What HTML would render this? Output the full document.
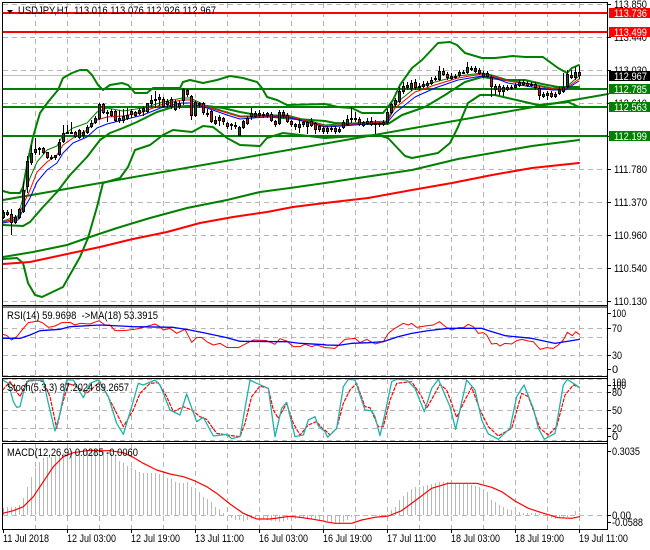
<!DOCTYPE html>
<html><head><meta charset="utf-8"><title>USDJPY,H1</title>
<style>
html,body{margin:0;padding:0;background:#fff;width:650px;height:550px;overflow:hidden}
svg{display:block}
text{font-family:"Liberation Sans",sans-serif;font-size:11px;fill:#000}
.g{fill:none;stroke:#b6b6b6;stroke-width:1;stroke-dasharray:5 4}
.l{fill:none;stroke-linejoin:round;stroke-linecap:round}
.z{vector-effect:non-scaling-stroke}
</style></head><body>
<svg width="650" height="550" viewBox="0 0 650 550" xmlns="http://www.w3.org/2000/svg">
<rect width="650" height="550" fill="#fff"/>
<!-- grid -->
<path class="g" d="M35.5 3V305M67.5 3V305M99.5 3V305M131.5 3V305M163.5 3V305M195.5 3V305M227.5 3V305M259.5 3V305M291.5 3V305M323.5 3V305M355.5 3V305M387.5 3V305M419.5 3V305M451.5 3V305M483.5 3V305M515.5 3V305M547.5 3V305M579.5 3V305"/>
<path class="g" d="M35.5 307V376M67.5 307V376M99.5 307V376M131.5 307V376M163.5 307V376M195.5 307V376M227.5 307V376M259.5 307V376M291.5 307V376M323.5 307V376M355.5 307V376M387.5 307V376M419.5 307V376M451.5 307V376M483.5 307V376M515.5 307V376M547.5 307V376M579.5 307V376"/>
<path class="g" d="M35.5 379V441M67.5 379V441M99.5 379V441M131.5 379V441M163.5 379V441M195.5 379V441M227.5 379V441M259.5 379V441M291.5 379V441M323.5 379V441M355.5 379V441M387.5 379V441M419.5 379V441M451.5 379V441M483.5 379V441M515.5 379V441M547.5 379V441M579.5 379V441"/>
<path class="g" d="M35.5 444V529M67.5 444V529M99.5 444V529M131.5 444V529M163.5 444V529M195.5 444V529M227.5 444V529M259.5 444V529M291.5 444V529M323.5 444V529M355.5 444V529M387.5 444V529M419.5 444V529M451.5 444V529M483.5 444V529M515.5 444V529M547.5 444V529M579.5 444V529"/>
<path class="g" d="M3 4.5H607M3 37.5H607M3 70.5H607M3 103.5H607M3 136.5H607M3 169.5H607M3 202.5H607M3 235.5H607M3 268.5H607M3 301.5H607"/>
<path class="g" d="M3 328.5H607M3 337.5H607M3 355.5H607M3 375.5H607"/>
<path class="g" d="M3 379.5H607M3 392.5H607M3 410.5H607M3 428.5H607M3 440.5H607"/>
<path class="g" d="M3 515.5H607"/>
<path d="M3 75.5H607" stroke="#c0c0c0" fill="none"/>

<!-- Bollinger / MA curves -->
<polyline class="l" stroke="#008000" stroke-width="2" points="3,191 10,193 20,193 23,187 28,160 33,137 40,113 48,102 58,90 63,78 72,73 80,70 87,70 92,75 98,85 103,90 110,85 122,83 128,85 135,93 147,93 153,88 180,88 183,82 190,80 203,83 217,80 230,76 243,78 257,82 262,88 267,97 277,100 287,105 325,104 338,107 352,108 362,113 383,113 388,107 393,100 400,85 412,68 422,60 438,43 450,42 457,45 465,53 482,58 495,58 513,56 525,57 543,57 558,68 567,73 572,68 579,65"/>
<polyline class="l" stroke="#008000" stroke-width="2" points="3,225 23,226 30,222 43,207 57,192 70,175 87,157 100,140 110,133 123,128 137,122 157,112 173,107 187,106 207,106 223,108 240,112 257,115 283,118 325,121 335,123 358,124 388,124 402,115 425,107 445,95 465,82 482,77 505,80 525,80 542,84 558,87 579,87"/>
<polyline class="l" stroke="#008000" stroke-width="2" points="3,259 17,258 23,263 28,283 35,295 42,297 63,287 80,257 88,238 97,207 103,183 120,178 128,167 135,150 150,145 163,135 173,130 192,132 203,126 213,127 227,138 240,145 260,146 267,138 283,133 300,135 325,138 340,137 378,135 388,138 405,156 412,158 438,153 450,143 458,127 468,103 480,95 495,95 512,99 538,105 558,103 568,102 579,107"/>
<polyline class="l" stroke="#008000" stroke-width="2" points="3,200 608,94"/>
<polyline class="l" stroke="#008000" stroke-width="2" points="3,257 33,252 67,245 87,238 117,228 150,218 187,208 227,200 260,192 290,188 325,183 358,178 412,170 458,159 492,153 532,146 579,140"/>
<polyline class="l" stroke="#ff0000" stroke-width="2" points="3,264 30,262 67,254 100,247 133,239 167,232 200,223 233,217 267,212 293,207 325,203 368,198 412,190 452,183 492,175 532,168 579,163"/>

<!-- levels -->
<path d="M3 13H608M3 32H608" stroke="#ff0000" stroke-width="2" fill="none"/>
<path d="M3 89H608M3 107H608M3 136H608" stroke="#008000" stroke-width="2" fill="none"/>

<!-- fast MAs -->
<polyline class="l" stroke="#008000" stroke-width="1" points="3,221 18,216 23,198 30,178 37,162 47,150 57,146 63,135 73,128 87,123 97,112 107,108 123,111 143,108 163,102 182,98 190,98 207,106 227,112 240,116 253,116 267,115 287,115 325,125 368,122 387,121 395,104 415,88 435,82 458,76 482,73 492,75 508,80 532,84 552,88 565,88 579,76"/>
<polyline class="l" stroke="#ff0000" stroke-width="1" points="3,222 18,218 23,205 30,190 37,172 47,162 57,155 63,145 73,138 87,130 97,120 107,117 123,116 143,112 163,104 182,100 190,100 207,107 227,113 240,117 253,117 267,116 287,116 325,126 342,125 368,123 387,122 395,108 415,92 435,85 458,78 482,74 492,76 508,81 532,85 552,89 565,89 579,79"/>
<polyline class="l" stroke="#0000ff" stroke-width="1" points="3,223 18,220 23,210 30,198 37,182 47,170 57,163 63,153 73,143 87,137 97,128 107,124 123,120 143,115 163,107 182,103 190,103 207,108 227,115 240,119 253,118 267,117 287,117 325,127 342,126 368,124 387,123 395,113 415,97 435,88 458,80 482,76 492,77 508,83 532,87 552,90 565,90 579,81"/>

<!-- candle wicks -->
<path stroke="#000" fill="none" d="M3.5 210V219M7.5 210V216M11.5 209V235M15.5 215V224M19.5 208V219M23.5 182V213M27.5 156V193M31.5 145V165M35.5 138V155M39.5 147V155M43.5 147V154M47.5 152V159M51.5 155V160M55.5 155V160M59.5 139V156M63.5 125V143M67.5 125V134M71.5 122V134M75.5 131V138M79.5 129V139M83.5 130V138M87.5 125V134M91.5 120V128M95.5 116V124M99.5 103V120M103.5 103V114M107.5 110V122M111.5 109V117M115.5 110V122M119.5 110V123M123.5 109V123M127.5 108V120M131.5 109V118M135.5 111V117M139.5 108V115M143.5 106V116M147.5 103V113M151.5 95V107M155.5 91V108M159.5 94V106M163.5 97V108M167.5 99V108M171.5 97V109M175.5 100V111M179.5 101V109M183.5 88V105M187.5 89V97M191.5 95V120M195.5 101V117M199.5 102V108M203.5 102V115M207.5 109V117M211.5 110V123M215.5 116V125M219.5 115V126M223.5 117V125M227.5 122V129M231.5 123V130M235.5 122V129M239.5 126V136M243.5 120V129M247.5 116V125M251.5 108V120M255.5 111V118M259.5 110V117M263.5 112V118M267.5 112V118M271.5 112V122M275.5 120V127M279.5 110V125M283.5 110V118M287.5 113V123M291.5 120V127M295.5 123V130M299.5 119V133M303.5 121V127M307.5 121V134M311.5 118V127M315.5 122V134M319.5 125V132M323.5 126V134M327.5 126V134M331.5 126V132M335.5 126V134M339.5 127V133M343.5 120V129M347.5 115V126M351.5 107V123M355.5 112V122M359.5 117V126M363.5 121V127M367.5 118V125M371.5 117V126M375.5 120V134M379.5 122V127M383.5 120V126M387.5 109V124M391.5 103V114M395.5 98V107M399.5 87V103M403.5 82V94M407.5 82V90M411.5 80V91M415.5 79V90M419.5 83V90M423.5 81V88M427.5 81V87M431.5 77V85M435.5 76V81M439.5 66V81M443.5 68V76M447.5 72V80M451.5 73V80M455.5 74V79M459.5 70V77M463.5 70V74M467.5 62V74M471.5 66V71M475.5 66V73M479.5 68V75M483.5 71V78M487.5 71V78M491.5 75V97M495.5 84V95M499.5 84V95M503.5 85V96M507.5 85V91M511.5 85V90M515.5 83V89M519.5 80V87M523.5 80V86M527.5 81V87M531.5 82V87M535.5 82V90M539.5 86V100M543.5 92V98M547.5 91V100M551.5 91V98M555.5 92V98M559.5 87V95M563.5 73V93M567.5 70V88M571.5 70V79M575.5 67V80M579.5 66V79"/>
<!-- green bodies -->
<path stroke="#000" fill="#006400" d="M2.5 212.5h2v5h-2zM6.5 212.5h2v2h-2zM14.5 217.5h2v5h-2zM18.5 209.5h2v8h-2zM22.5 190.5h2v21h-2zM26.5 161.5h2v25h-2zM30.5 153.5h2v9h-2zM34.5 149.5h2v3h-2zM38.5 148.5h2v1h-2zM50.5 157.5h2v1h-2zM54.5 155.5h2v2h-2zM58.5 142.5h2v12h-2zM62.5 133.5h2v8h-2zM66.5 132.5h2v1h-2zM70.5 132.5h2v1h-2zM78.5 130.5h2v7h-2zM82.5 132.5h2v3h-2zM86.5 127.5h2v5h-2zM90.5 123.5h2v3h-2zM94.5 118.5h2v4h-2zM98.5 104.5h2v14h-2zM106.5 112.5h2v1h-2zM110.5 111.5h2v4h-2zM118.5 118.5h2v2h-2zM122.5 116.5h2v4h-2zM126.5 115.5h2v3h-2zM130.5 111.5h2v3h-2zM138.5 110.5h2v3h-2zM142.5 108.5h2v3h-2zM146.5 103.5h2v8h-2zM150.5 100.5h2v3h-2zM154.5 99.5h2v1h-2zM158.5 97.5h2v2h-2zM166.5 101.5h2v3h-2zM174.5 102.5h2v7h-2zM178.5 103.5h2v3h-2zM182.5 89.5h2v11h-2zM194.5 102.5h2v13h-2zM198.5 103.5h2v1h-2zM206.5 113.5h2v1h-2zM214.5 120.5h2v3h-2zM218.5 117.5h2v3h-2zM234.5 125.5h2v1h-2zM238.5 127.5h2v8h-2zM242.5 121.5h2v6h-2zM250.5 113.5h2v3h-2zM254.5 113.5h2v3h-2zM258.5 113.5h2v2h-2zM266.5 113.5h2v2h-2zM278.5 112.5h2v11h-2zM294.5 124.5h2v2h-2zM298.5 124.5h2v3h-2zM306.5 122.5h2v4h-2zM322.5 128.5h2v3h-2zM326.5 128.5h2v3h-2zM330.5 128.5h2v1h-2zM338.5 129.5h2v2h-2zM342.5 122.5h2v5h-2zM346.5 119.5h2v5h-2zM350.5 118.5h2v1h-2zM354.5 118.5h2v1h-2zM362.5 122.5h2v3h-2zM366.5 121.5h2v2h-2zM374.5 123.5h2v1h-2zM378.5 123.5h2v1h-2zM382.5 122.5h2v2h-2zM386.5 112.5h2v10h-2zM390.5 104.5h2v8h-2zM394.5 100.5h2v4h-2zM398.5 91.5h2v10h-2zM402.5 86.5h2v5h-2zM406.5 85.5h2v2h-2zM410.5 83.5h2v5h-2zM418.5 86.5h2v1h-2zM422.5 84.5h2v2h-2zM426.5 83.5h2v2h-2zM430.5 80.5h2v3h-2zM434.5 78.5h2v1h-2zM438.5 71.5h2v8h-2zM450.5 76.5h2v2h-2zM454.5 76.5h2v1h-2zM458.5 72.5h2v3h-2zM462.5 72.5h2v1h-2zM466.5 67.5h2v5h-2zM470.5 68.5h2v1h-2zM474.5 68.5h2v3h-2zM478.5 70.5h2v3h-2zM482.5 73.5h2v3h-2zM486.5 73.5h2v3h-2zM494.5 86.5h2v3h-2zM502.5 87.5h2v4h-2zM506.5 87.5h2v2h-2zM510.5 87.5h2v1h-2zM514.5 85.5h2v2h-2zM518.5 82.5h2v3h-2zM522.5 82.5h2v2h-2zM530.5 84.5h2v1h-2zM542.5 94.5h2v2h-2zM546.5 93.5h2v2h-2zM558.5 89.5h2v4h-2zM562.5 87.5h2v4h-2zM566.5 74.5h2v12h-2zM574.5 72.5h2v5h-2z"/>
<!-- red bodies -->
<path stroke="#000" fill="#ff0000" d="M10.5 214.5h2v8h-2zM42.5 148.5h2v4h-2zM46.5 152.5h2v5h-2zM74.5 132.5h2v4h-2zM102.5 104.5h2v8h-2zM114.5 111.5h2v9h-2zM134.5 112.5h2v3h-2zM162.5 99.5h2v7h-2zM170.5 99.5h2v7h-2zM186.5 90.5h2v4h-2zM190.5 96.5h2v19h-2zM202.5 103.5h2v9h-2zM210.5 111.5h2v10h-2zM222.5 118.5h2v3h-2zM226.5 123.5h2v3h-2zM230.5 124.5h2v1h-2zM246.5 118.5h2v5h-2zM262.5 114.5h2v1h-2zM270.5 114.5h2v6h-2zM274.5 121.5h2v3h-2zM282.5 112.5h2v3h-2zM286.5 115.5h2v6h-2zM290.5 121.5h2v3h-2zM302.5 122.5h2v2h-2zM310.5 121.5h2v4h-2zM314.5 123.5h2v6h-2zM318.5 126.5h2v3h-2zM334.5 128.5h2v3h-2zM358.5 119.5h2v5h-2zM370.5 121.5h2v3h-2zM414.5 82.5h2v5h-2zM442.5 71.5h2v3h-2zM446.5 74.5h2v3h-2zM490.5 77.5h2v9h-2zM498.5 86.5h2v5h-2zM526.5 83.5h2v2h-2zM534.5 84.5h2v3h-2zM538.5 88.5h2v7h-2zM550.5 93.5h2v3h-2zM554.5 94.5h2v2h-2zM570.5 75.5h2v2h-2zM578.5 72.5h2v3h-2z"/>

<!-- indicators (coordinates at 3x scale) -->
<path stroke="#b8b8b8" fill="none" d="M3.5 515V508M7.5 515V507M11.5 515V507M15.5 515V507M19.5 515V505M23.5 515V498M27.5 515V487M31.5 515V477M35.5 515V468M39.5 515V462M43.5 515V458M47.5 515V457M51.5 515V457M55.5 515V456M59.5 515V455M63.5 515V453M67.5 515V452M71.5 515V451M75.5 515V451M79.5 515V450M83.5 515V450M87.5 515V450M91.5 515V450M95.5 515V450M99.5 515V450M103.5 515V451M107.5 515V452M111.5 515V453M115.5 515V455M119.5 515V461M123.5 515V463M127.5 515V466M131.5 515V468M135.5 515V470M139.5 515V472M143.5 515V473M147.5 515V473M151.5 515V473M155.5 515V473M159.5 515V474M163.5 515V475M167.5 515V478M171.5 515V479M175.5 515V482M179.5 515V483M183.5 515V483M187.5 515V482M191.5 515V487M195.5 515V488M199.5 515V492M203.5 515V497M207.5 515V499M211.5 515V502M215.5 515V507M219.5 515V509M223.5 515V513M231.5 515V518M235.5 515V520M239.5 515V520M243.5 515V521M247.5 515V520M251.5 515V519M255.5 515V518M259.5 515V518M263.5 515V519M267.5 515V520M271.5 515V521M275.5 515V521M279.5 515V522M283.5 515V521M287.5 515V520M291.5 515V519M295.5 515V519M299.5 515V518M303.5 515V518M307.5 515V518M311.5 515V519M315.5 515V519M319.5 515V520M323.5 515V520M327.5 515V522M331.5 515V523M335.5 515V524M339.5 515V523M343.5 515V522M347.5 515V520M351.5 515V517M355.5 515V517M359.5 515V516M363.5 515V516M367.5 515V516M371.5 515V516M375.5 515V516M379.5 515V516M383.5 515V516M387.5 515V514M391.5 515V510M395.5 515V507M399.5 515V500M403.5 515V496M407.5 515V492M411.5 515V489M415.5 515V487M419.5 515V487M423.5 515V486M427.5 515V485M431.5 515V484M435.5 515V483M439.5 515V482M443.5 515V482M447.5 515V482M451.5 515V483M455.5 515V484M459.5 515V484M463.5 515V484M467.5 515V484M471.5 515V485M475.5 515V486M479.5 515V487M483.5 515V489M487.5 515V492M491.5 515V500M495.5 515V502M499.5 515V505M503.5 515V507M507.5 515V509M511.5 515V510M515.5 515V511M519.5 515V512M523.5 515V513M527.5 515V513M531.5 515V513M535.5 515V513M539.5 515V514M547.5 515V517M551.5 515V518M555.5 515V519M559.5 515V518M563.5 515V518M567.5 515V517M575.5 515V511M579.5 515V513"/>
<g transform="translate(0 300) scale(.33333)">
<polyline class="l z" stroke="#ff0000" stroke-width="1" points="8,103 20,106 35,120 50,110 70,85 85,68 115,63 130,70 145,82 165,78 185,68 210,67 225,75 240,70 270,72 297,62 315,75 330,75 345,92 370,92 410,87 445,78 465,72 480,80 490,90 510,85 530,100 555,88 575,127 590,113 605,112 620,125 640,135 660,130 680,142 715,143 740,130 760,120 800,122 825,133 840,116 860,123 880,140 900,140 915,133 935,140 950,135 975,143"/>
<polyline class="l z" stroke="#0000ff" stroke-width="1.3" points="8,115 60,115 90,105 120,92 180,88 210,80 300,75 400,80 520,82 570,90 620,100 680,113 720,124 860,125 900,130 975,134"/>
<polyline class="l z" stroke="#ff0000" stroke-width="1.2" stroke-dasharray="3 2" points="8,270 30,245 60,290 80,245 110,240 130,245 150,290 170,385 185,320 205,250 230,260 260,280 300,245 340,320 370,380 400,330 420,280 450,250 475,248 500,290 520,335 550,320 575,330 600,350 620,358 650,400 680,405 720,410 735,370 755,290 780,258 805,265 820,330 835,355 860,310 880,370 900,405 925,375 950,365 975,395"/>
<polyline class="l z" stroke="#20b2aa" stroke-width="1.3" points="8,240 25,250 40,305 50,322 60,320 72,270 85,240 130,240 145,310 165,393 180,340 200,240 220,240 250,293 270,250 295,240 325,290 350,370 370,403 395,320 415,250 430,255 465,240 480,255 510,330 540,345 560,282 590,365 610,352 640,408 680,403 695,416 720,410 750,240 770,250 805,265 825,410 845,325 860,307 885,410 910,405 925,360 945,350 955,378 975,395"/>
<polyline class="l z" stroke="#ff0000" stroke-width="1.2" points="8,640 40,632 70,620 100,590 130,545 160,500 190,470 220,458 260,452 330,452 370,458 400,472 430,490 470,510 510,522 550,530 585,543 620,560 650,580 690,612 730,640 770,657 810,657 870,649 900,652 940,658 975,664"/>
</g>
<g transform="translate(325 300) scale(.33333)">
<polyline class="l z" stroke="#ff0000" stroke-width="1" points="0,143 30,145 60,118 90,115 105,128 125,118 150,132 175,125 190,100 205,88 235,70 250,75 260,70 275,82 300,78 325,75 343,65 365,83 380,90 400,83 415,83 430,73 445,80 460,100 475,98 485,105 500,132 515,130 525,138 540,130 560,132 575,122 590,118 610,123 625,125 645,148 665,143 685,145 700,135 715,120 727,97 742,107 752,95 763,103"/>
<polyline class="l z" stroke="#0000ff" stroke-width="1.3" points="0,135 40,136 80,130 130,128 175,125 220,110 260,100 310,92 370,85 470,85 500,95 540,107 620,115 690,130 763,118"/>
<polyline class="l z" stroke="#ff0000" stroke-width="1.2" stroke-dasharray="3 2" points="0,390 15,405 35,385 55,310 75,270 95,250 120,320 135,323 160,380 175,380 195,300 215,250 260,245 290,290 305,325 345,253 365,270 395,352 420,300 440,262 465,330 490,380 520,408 560,385 590,280 610,290 645,385 670,405 695,380 720,285 745,255 763,262"/>
<polyline class="l z" stroke="#20b2aa" stroke-width="1.3" points="0,395 8,412 35,385 55,260 70,238 90,240 120,330 140,332 150,350 165,407 180,340 200,245 215,238 245,240 270,265 298,335 320,265 340,238 375,320 392,388 425,240 450,270 470,360 490,402 520,418 555,385 575,290 597,255 625,325 640,385 658,418 690,400 715,255 727,238 745,250 763,262"/>
<polyline class="l z" stroke="#ff0000" stroke-width="1.2" points="0,665 30,670 80,670 110,660 150,652 190,648 230,632 280,595 320,565 370,550 455,550 500,562 530,575 570,603 610,625 650,638 700,653 740,655 763,650"/>
</g>

<!-- frame -->
<path fill="#000" d="M2 2H608V3H2zM2 2H3V305H2zM2 305H608V306H2zM2 306.500H608V307.500H2zM2 306H3V376H2zM2 376H608V377H2zM2 378H608V379H2zM2 378H3V441H2zM2 441H608V442H2zM2 443H608V444H2zM2 443H3V529H2zM2 529H608V530H2zM607 2H608V530H607z"/>
<path stroke="#000" fill="none" d="M3.500 530V533M67.500 530V533M131.500 530V533M195.500 530V533M259.500 530V533M323.500 530V533M387.500 530V533M451.500 530V533M515.500 530V533M579.500 530V533M608 4.500H611M608 37.500H611M608 70.500H611M608 103.500H611M608 136.500H611M608 169.500H611M608 202.500H611M608 235.500H611M608 268.500H611M608 301.500H611M608 313.500H611M608 328.500H611M608 355.500H611M608 369.500H611M608 385.500H611M608 392.500H611M608 410.500H611M608 428.500H611M608 436.500H611M608 451.500H611M608 515.500H611M608 522.500H611"/>

<!-- header -->
<path d="M7 10H13L10 13.500Z" fill="#000"/>
<text x="18" y="14" textLength="198" lengthAdjust="spacingAndGlyphs" xml:space="preserve">USDJPY,H1  113.016 113.076 112.926 112.967</text>

<!-- price axis -->
<g>
<text x="614" y="8" textLength="33" lengthAdjust="spacingAndGlyphs">113.850</text>
<text x="614" y="41" textLength="33" lengthAdjust="spacingAndGlyphs">113.440</text>
<text x="614" y="74" textLength="33" lengthAdjust="spacingAndGlyphs">113.030</text>
<text x="614" y="107" textLength="33" lengthAdjust="spacingAndGlyphs">112.610</text>
<text x="614" y="173" textLength="33" lengthAdjust="spacingAndGlyphs">111.780</text>
<text x="614" y="206" textLength="33" lengthAdjust="spacingAndGlyphs">111.370</text>
<text x="614" y="239" textLength="33" lengthAdjust="spacingAndGlyphs">110.960</text>
<text x="614" y="272" textLength="33" lengthAdjust="spacingAndGlyphs">110.540</text>
<text x="614" y="305" textLength="33" lengthAdjust="spacingAndGlyphs">110.130</text>
</g>
<rect x="609" y="8" width="41" height="10" fill="#ff0000"/>
<rect x="609" y="27" width="41" height="10" fill="#ff0000"/>
<rect x="609" y="71" width="41" height="10" fill="#000"/>
<rect x="609" y="84" width="41" height="10" fill="#008000"/>
<rect x="609" y="102" width="41" height="10" fill="#008000"/>
<rect x="609" y="131" width="41" height="10" fill="#008000"/>
<text style="fill:#fff" x="614" y="17" textLength="33" lengthAdjust="spacingAndGlyphs">113.736</text>
<text style="fill:#fff" x="614" y="36" textLength="33" lengthAdjust="spacingAndGlyphs">113.499</text>
<text style="fill:#fff" x="614" y="80" textLength="33" lengthAdjust="spacingAndGlyphs">112.967</text>
<text style="fill:#fff" x="614" y="93" textLength="33" lengthAdjust="spacingAndGlyphs">112.785</text>
<text style="fill:#fff" x="614" y="111" textLength="33" lengthAdjust="spacingAndGlyphs">112.563</text>
<text style="fill:#fff" x="614" y="140" textLength="33" lengthAdjust="spacingAndGlyphs">112.199</text>

<!-- indicator labels -->
<text x="7" y="319" textLength="151" lengthAdjust="spacingAndGlyphs" xml:space="preserve">RSI(14) 59.9698  -&gt;MA(18) 53.3915</text>
<text x="7" y="391" textLength="122" lengthAdjust="spacingAndGlyphs">Stoch(5,3,3) 87.2024 89.2657</text>
<text x="7" y="456" textLength="131" lengthAdjust="spacingAndGlyphs">MACD(12,26,9) 0.0285 -0.0060</text>

<text x="612" y="317" textLength="14" lengthAdjust="spacingAndGlyphs">100</text>
<text x="612" y="332" textLength="10" lengthAdjust="spacingAndGlyphs">70</text>
<text x="612" y="359" textLength="10" lengthAdjust="spacingAndGlyphs">30</text>
<text x="612" y="373">0</text>
<text x="612" y="386" textLength="14" lengthAdjust="spacingAndGlyphs">100</text>
<text x="612" y="389" textLength="14" lengthAdjust="spacingAndGlyphs">100</text>
<text x="612" y="396" textLength="10" lengthAdjust="spacingAndGlyphs">80</text>
<text x="612" y="414" textLength="10" lengthAdjust="spacingAndGlyphs">50</text>
<text x="612" y="432" textLength="10" lengthAdjust="spacingAndGlyphs">20</text>
<text x="612" y="440">0</text>
<text x="612" y="455" textLength="28" lengthAdjust="spacingAndGlyphs">0.3035</text>
<text x="612" y="519" textLength="19" lengthAdjust="spacingAndGlyphs">0.00</text>
<text x="612" y="526" textLength="31" lengthAdjust="spacingAndGlyphs">-0.0588</text>

<!-- time axis -->
<text x="3" y="542" textLength="46" lengthAdjust="spacingAndGlyphs">11 Jul 2018</text>
<text x="67" y="542" textLength="49" lengthAdjust="spacingAndGlyphs">12 Jul 03:00</text>
<text x="131" y="542" textLength="49" lengthAdjust="spacingAndGlyphs">12 Jul 19:00</text>
<text x="195" y="542" textLength="49" lengthAdjust="spacingAndGlyphs">13 Jul 11:00</text>
<text x="259" y="542" textLength="49" lengthAdjust="spacingAndGlyphs">16 Jul 03:00</text>
<text x="323" y="542" textLength="49" lengthAdjust="spacingAndGlyphs">16 Jul 19:00</text>
<text x="387" y="542" textLength="49" lengthAdjust="spacingAndGlyphs">17 Jul 11:00</text>
<text x="451" y="542" textLength="49" lengthAdjust="spacingAndGlyphs">18 Jul 03:00</text>
<text x="515" y="542" textLength="49" lengthAdjust="spacingAndGlyphs">18 Jul 19:00</text>
<text x="579" y="542" textLength="49" lengthAdjust="spacingAndGlyphs">19 Jul 11:00</text>
</svg>
</body></html>
